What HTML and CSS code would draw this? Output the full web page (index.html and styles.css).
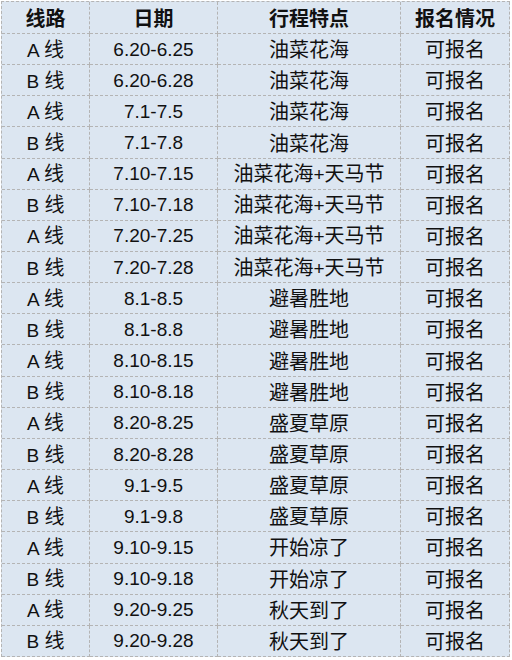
FILE: index.html
```html
<!DOCTYPE html>
<html lang="zh-CN">
<head>
<meta charset="utf-8">
<link rel="stylesheet" href="styles.css">
</head>
<body>
<div class="sheet">
  <div class="cell head"><span class="zh">线路</span></div>
  <div class="cell head"><span class="zh">日期</span></div>
  <div class="cell head"><span class="zh">行程特点</span></div>
  <div class="cell head"><span class="zh">报名情况</span></div>

  <div class="cell"><span>A <span class="zh">线</span></span></div><div class="cell">6.20-6.25</div><div class="cell"><span class="zh">油菜花海</span></div><div class="cell"><span class="zh">可报名</span></div>
  <div class="cell"><span>B <span class="zh">线</span></span></div><div class="cell">6.20-6.28</div><div class="cell"><span class="zh">油菜花海</span></div><div class="cell"><span class="zh">可报名</span></div>
  <div class="cell"><span>A <span class="zh">线</span></span></div><div class="cell">7.1-7.5</div><div class="cell"><span class="zh">油菜花海</span></div><div class="cell"><span class="zh">可报名</span></div>
  <div class="cell"><span>B <span class="zh">线</span></span></div><div class="cell">7.1-7.8</div><div class="cell"><span class="zh">油菜花海</span></div><div class="cell"><span class="zh">可报名</span></div>
  <div class="cell"><span>A <span class="zh">线</span></span></div><div class="cell">7.10-7.15</div><div class="cell"><span><span class="zh">油菜花海</span>+<span class="zh">天马节</span></span></div><div class="cell"><span class="zh">可报名</span></div>
  <div class="cell"><span>B <span class="zh">线</span></span></div><div class="cell">7.10-7.18</div><div class="cell"><span><span class="zh">油菜花海</span>+<span class="zh">天马节</span></span></div><div class="cell"><span class="zh">可报名</span></div>
  <div class="cell"><span>A <span class="zh">线</span></span></div><div class="cell">7.20-7.25</div><div class="cell"><span><span class="zh">油菜花海</span>+<span class="zh">天马节</span></span></div><div class="cell"><span class="zh">可报名</span></div>
  <div class="cell"><span>B <span class="zh">线</span></span></div><div class="cell">7.20-7.28</div><div class="cell"><span><span class="zh">油菜花海</span>+<span class="zh">天马节</span></span></div><div class="cell"><span class="zh">可报名</span></div>
  <div class="cell"><span>A <span class="zh">线</span></span></div><div class="cell">8.1-8.5</div><div class="cell"><span class="zh">避暑胜地</span></div><div class="cell"><span class="zh">可报名</span></div>
  <div class="cell"><span>B <span class="zh">线</span></span></div><div class="cell">8.1-8.8</div><div class="cell"><span class="zh">避暑胜地</span></div><div class="cell"><span class="zh">可报名</span></div>
  <div class="cell"><span>A <span class="zh">线</span></span></div><div class="cell">8.10-8.15</div><div class="cell"><span class="zh">避暑胜地</span></div><div class="cell"><span class="zh">可报名</span></div>
  <div class="cell"><span>B <span class="zh">线</span></span></div><div class="cell">8.10-8.18</div><div class="cell"><span class="zh">避暑胜地</span></div><div class="cell"><span class="zh">可报名</span></div>
  <div class="cell"><span>A <span class="zh">线</span></span></div><div class="cell">8.20-8.25</div><div class="cell"><span class="zh">盛夏草原</span></div><div class="cell"><span class="zh">可报名</span></div>
  <div class="cell"><span>B <span class="zh">线</span></span></div><div class="cell">8.20-8.28</div><div class="cell"><span class="zh">盛夏草原</span></div><div class="cell"><span class="zh">可报名</span></div>
  <div class="cell"><span>A <span class="zh">线</span></span></div><div class="cell">9.1-9.5</div><div class="cell"><span class="zh">盛夏草原</span></div><div class="cell"><span class="zh">可报名</span></div>
  <div class="cell"><span>B <span class="zh">线</span></span></div><div class="cell">9.1-9.8</div><div class="cell"><span class="zh">盛夏草原</span></div><div class="cell"><span class="zh">可报名</span></div>
  <div class="cell"><span>A <span class="zh">线</span></span></div><div class="cell">9.10-9.15</div><div class="cell"><span class="zh">开始凉了</span></div><div class="cell"><span class="zh">可报名</span></div>
  <div class="cell"><span>B <span class="zh">线</span></span></div><div class="cell">9.10-9.18</div><div class="cell"><span class="zh">开始凉了</span></div><div class="cell"><span class="zh">可报名</span></div>
  <div class="cell"><span>A <span class="zh">线</span></span></div><div class="cell">9.20-9.25</div><div class="cell"><span class="zh">秋天到了</span></div><div class="cell"><span class="zh">可报名</span></div>
  <div class="cell"><span>B <span class="zh">线</span></span></div><div class="cell">9.20-9.28</div><div class="cell"><span class="zh">秋天到了</span></div><div class="cell"><span class="zh">可报名</span></div>
</div>
</body>
</html>
```

FILE: styles.css
```css
html, body {
  margin: 0;
  padding: 0;
  background: #ffffff;
}

.sheet {
  margin: 1px 0 0 1px;
  width: 509px;
  height: 656px;
  box-sizing: border-box;
  display: grid;
  grid-template-columns: 88px 128px 183px 109px;
  grid-template-rows: 32px repeat(20, 1fr);
  border-left: 1px dashed #b4b4b4;
  border-top: 1px dashed #b4b4b4;
  background: #dce6f1;
  font-family: "Liberation Sans", "Noto Sans CJK SC", sans-serif;
  font-size: 19px;
  color: #111111;
}

.cell {
  display: flex;
  align-items: center;
  justify-content: center;
  border-right: 1px dashed #b4b4b4;
  border-bottom: 1px dashed #b4b4b4;
  white-space: nowrap;
  line-height: 1;
}

.zh {
  font-family: "Noto Sans CJK SC", sans-serif;
  font-size: 20px;
}

.head {
  font-weight: bold;
}
```
